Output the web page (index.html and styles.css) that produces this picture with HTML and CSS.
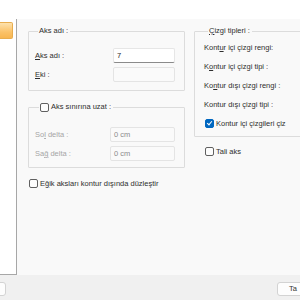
FILE: index.html
```html
<!DOCTYPE html>
<html>
<head>
  <title>Aks özellikleri</title>
  <meta http-equiv="Content-Type" content="text/html; charset=UTF-8" />
  <link rel="stylesheet" href="styles.css">
</head>
<body>
  <div class="top"></div>
  <div class="middle">
    <div class="side">
      <div class="side-item"></div>
    </div>
    <div class="main">
      <div class="col-left">
        <fieldset class="group group-name">
          <legend>Aks adı :</legend>
          <div class="row">
            <span class="label"><u>A</u>ks adı :</span>
            <div class="input">7</div>
          </div>
          <div class="row">
            <span class="label"><u>E</u>ki :</span>
            <div class="input off"></div>
          </div>
        </fieldset>
        <fieldset class="group group-extend">
          <legend><span class="box"></span>Aks sınırına uzat :</legend>
          <div class="row row-delta">
            <span class="label dim">So<u>l</u> delta :</span>
            <div class="input off">0 cm</div>
          </div>
          <div class="row row-delta">
            <span class="label dim">Sa<u>ğ</u> delta :</span>
            <div class="input off">0 cm</div>
          </div>
        </fieldset>
        <div class="check-line line-flat">
          <span class="box"></span>E<u>ğ</u>ik aksları kontur dışında düzleştir
        </div>
      </div>
      <div class="col-right">
        <fieldset class="group group-lines">
          <legend><u>Ç</u>izgi tipleri :</legend>
          <div class="line">Kont<u>u</u>r içi çizgi rengi:</div>
          <div class="line">K<u>o</u>ntur içi çizgi tipi :</div>
          <div class="line">Ko<u>n</u>tur dışı çizgi rengi :</div>
          <div class="line">Kontur dışı çizgi tipi :</div>
          <div class="line line-check"><span class="box on"></span>Kontur içi çizgileri çiz</div>
        </fieldset>
        <div class="check-line line-tali">
          <span class="box"></span>Tali aks
        </div>
      </div>
    </div>
  </div>
  <div class="bottom">
    <div class="button button-left"></div>
    <div class="spacer"></div>
    <div class="button button-ok">Ta</div>
  </div>
</body>
</html>
```

FILE: styles.css
```css
body {
  margin: 0;
  width: 300px;
  height: 300px;
  overflow: hidden;
  font-family: "Liberation Sans", Arial, sans-serif;
  font-size: 7.5px;
  color: #2e2e2e;
  background-color: #ffffff;
}
.top {
  height: 19px;
  background-color: #ffffff;
}
.middle {
  display: flex;
  height: 256px;
}
.side {
  width: 17px;
  flex: none;
  box-sizing: border-box;
  padding-top: 3px;
  background-color: #ffffff;
  border-right: 1px solid #a7a7a7;
  border-bottom: 1px solid #a7a7a7;
}
.side-item {
  width: 13px;
  height: 17px;
  box-sizing: border-box;
  border: 1px solid #e8ad4e;
  border-left: none;
  border-radius: 0 2px 2px 0;
  background: linear-gradient(#fde2ad, #fbc268 60%, #f8b650);
}
.main {
  flex: 1;
  display: flex;
  gap: 9px;
  padding: 7px 0 0 11px;
  background-color: #f9f9f9;
  overflow: hidden;
}
.col-left {
  width: 157px;
  flex: none;
}
.col-right {
  width: 130px;
  flex: none;
}
.group {
  margin: 0;
  min-width: 0;
  border: 1px solid #dcdcdc;
  border-radius: 1px;
}
.group legend {
  display: flex;
  align-items: center;
  height: 10px;
  padding: 0 2px 0 1px;
  margin-left: 3px;
  line-height: 10px;
}
.group-name {
  padding: 12px 9px 8px 6px;
}
.group-extend {
  margin-top: 11px;
  padding: 15px 9px 6px 6px;
}
.group-extend legend {
  margin-left: 4px;
}
.group-lines {
  padding: 5px 0 7px 9px;
}
.group-lines legend {
  margin-left: 4px;
}
.row {
  display: flex;
  align-items: center;
  height: 15px;
}
.row + .row {
  margin-top: 4px;
}
.label {
  width: 78px;
  flex: none;
}
.row-delta .label {
  width: 75px;
}
.dim {
  color: #a6a6a6;
}
.input {
  flex: 1;
  height: 15px;
  box-sizing: border-box;
  padding: 0 3px;
  line-height: 13px;
  background-color: #ffffff;
  border: 1px solid #e6e6e6;
  border-bottom-color: #8a8a8a;
  border-radius: 2px;
}
.input.off {
  background-color: #fafafa;
  border-color: #e4e4e4;
  color: #8b8b8b;
}
.line {
  display: flex;
  align-items: center;
  height: 12px;
}
.line + .line {
  margin-top: 7px;
}
.line-check {
  margin-left: 1px;
}
.box {
  width: 9px;
  height: 9px;
  flex: none;
  box-sizing: border-box;
  margin-right: 2px;
  border: 1px solid #606060;
  border-radius: 2px;
  background-color: #fdfdfd;
}
.box.on {
  position: relative;
  border-color: #0067c0;
  background-color: #0067c0;
}
.box.on::after {
  content: "";
  position: absolute;
  left: 2px;
  top: 0px;
  width: 2px;
  height: 4px;
  border-right: 1px solid #ffffff;
  border-bottom: 1px solid #ffffff;
  transform: rotate(40deg);
}
.check-line {
  display: flex;
  align-items: center;
  height: 9px;
}
.line-flat {
  margin-top: 11px;
  padding-left: 1px;
}
.line-tali {
  margin-top: 10px;
  padding-left: 11px;
}
.bottom {
  display: flex;
  align-items: flex-start;
  height: 25px;
  padding-top: 7px;
  box-sizing: border-box;
  background-color: #f0f0f0;
}
.spacer {
  flex: 1;
}
.button {
  height: 14px;
  box-sizing: border-box;
  background-color: #fdfdfd;
  border: 1px solid #d3d3d3;
  border-radius: 3px;
  line-height: 12px;
}
.button-left {
  width: 20px;
  margin-left: -14px;
}
.button-ok {
  width: 50px;
  margin-right: -27px;
  padding-left: 11px;
  color: #333333;
}
```
